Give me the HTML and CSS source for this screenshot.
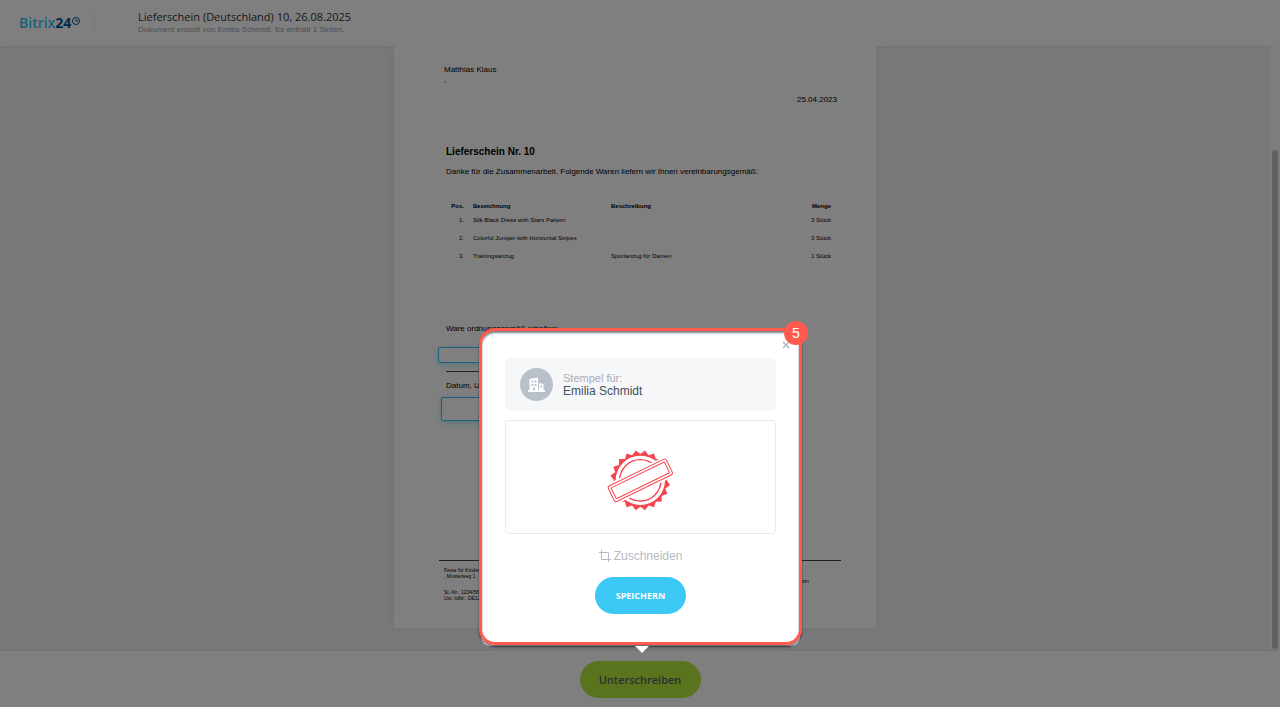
FILE: index.html
```html
<!DOCTYPE html>
<html lang="de">
<head>
	<title>Lieferschein (Deutschland) 10</title>
	<meta charset="utf-8">
	<link rel="stylesheet" href="styles.css">
</head>
<body>
<div class="app">
	<header class="header">
		<a class="logo" href="#">
			<span class="logo-name">Bitrix</span><span class="logo-num">24</span>
			<svg class="logo-clock" viewBox="0 0 16 16"><circle cx="8" cy="8" r="7"/><path d="M8 4v4h4"/></svg>
		</a>
		<div class="doc-info">
			<h1>Lieferschein (Deutschland) 10, 26.08.2025</h1>
			<p>Dokument erstellt von Emilia Schmidt. Es enthält 1 Seiten.</p>
		</div>
	</header>

	<main class="main">
		<div class="viewer">
			<article class="page">
				<p class="client">Matthias Klaus<br>,</p>
				<p class="date">25.04.2023</p>
				<h2>Lieferschein Nr. 10</h2>
				<p class="intro">Danke für die Zusammenarbeit. Folgende Waren liefern wir Ihnen vereinbarungsgemäß:</p>
				<table class="goods">
					<thead>
						<tr><th class="pos">Pos.</th><th class="name">Bezeichnung</th><th>Beschreibung</th><th class="qty">Menge</th></tr>
					</thead>
					<tbody>
						<tr><td class="pos">1.</td><td>Silk Black Dress with Stars Pattern</td><td></td><td class="qty">3 Stück</td></tr>
						<tr><td class="pos">2.</td><td>Colorful Jumper with Horizontal Stripes</td><td></td><td class="qty">3 Stück</td></tr>
						<tr><td class="pos">3.</td><td>Trainingsanzug</td><td>Sportanzug für Damen</td><td class="qty">1 Stück</td></tr>
					</tbody>
				</table>
				<p class="received">Ware ordnungsgemäß erhalten:</p>
				<div class="field field-date"></div>
				<div class="sign-line"></div>
				<p>Datum, Unterschrift</p>
				<div class="field field-sign"></div>
				<footer class="page-footer">
					<div>
						<p>Feste für Kinder<br>, Musterweg 1,</p>
						<p>St.-Nr.: 1234/567<br>Ust.-IdNr.: DE123</p>
					</div>
					<p class="mail">.com</p>
				</footer>
			</article>
		</div>
		<div class="scroll"><div class="scroll-thumb"></div></div>
	</main>

	<footer class="bottom">
		<button class="btn btn-sign" type="button">Unterschreiben</button>
	</footer>
</div>

<div class="overlay"></div>

<!-- Stempel -->
<div class="popup" role="dialog" aria-label="Stempel">
	<button class="close" type="button" aria-label="Schließen">
		<svg viewBox="0 0 16 16"><path d="M2 2l12 12M14 2L2 14"/></svg>
	</button>
	<div class="owner">
		<span class="owner-icon">
			<svg viewBox="0 0 18 16">
				<path fill-rule="evenodd" d="M0 15v-2h1.500V2L10 .5V13h1V6l4.500 1v6H17v2zM3.500 3.500v2h1.800v-2zM6.500 3.500v2h1.800v-2zM3.500 7v2h1.800V7zM6.500 7v2h1.800V7zM5 10.500V13h2v-2.500zM12.300 8.500v2h1.800v-2z"/>
			</svg>
		</span>
		<div>
			<p class="owner-label">Stempel für:</p>
			<p class="owner-name">Emilia Schmidt</p>
		</div>
	</div>
	<div class="stamp">
		<svg viewBox="0 0 300 300">
			<!-- five turned squares make the 20 teeth -->
			<g class="teeth">
				<rect x="84" y="87" width="128" height="128"/>
				<rect x="84" y="87" width="128" height="128" transform="rotate(18 148 151)"/>
				<rect x="84" y="87" width="128" height="128" transform="rotate(36 148 151)"/>
				<rect x="84" y="87" width="128" height="128" transform="rotate(54 148 151)"/>
				<rect x="84" y="87" width="128" height="128" transform="rotate(72 148 151)"/>
			</g>
			<circle class="gap" cx="148" cy="151" r="74"/>
			<circle class="ring-inner" cx="148" cy="151" r="62"/>
			<g transform="rotate(-26 148 151)">
				<rect class="gap" x="40" y="118" width="216" height="66"/>
				<rect class="band" x="51" y="125" width="194" height="52" rx="7"/>
				<rect class="band" x="59" y="133" width="178" height="36" rx="2"/>
			</g>
		</svg>
	</div>
	<button class="crop" type="button">
		<svg viewBox="0 0 12 12"><path d="M2.500 0v9.500H12M0 2.500h9.500V12"/></svg>
		Zuschneiden
	</button>
	<button class="btn btn-save" type="button">SPEICHERN</button>
	<div class="frame"></div>
	<span class="badge">5</span>
</div>
</body>
</html>
```

FILE: styles.css
```css
* { box-sizing: border-box; }
body, h1, h2, p { margin: 0; padding: 0; }
body { font-family: "Liberation Sans", Arial, sans-serif; color: #000; background-color: #fff; }
a { text-decoration: none; }
button { border: 0; padding: 0; background: none; cursor: pointer; }

.app { display: flex; flex-direction: column; height: 100vh; overflow: hidden; }

/* header */
.header { display: flex; align-items: center; height: 46px; padding-left: 19px; background-color: #fff; }
.logo { display: flex; align-items: center; width: 76px; height: 18px; margin-right: 43px; border-right: 1px solid #f4f4f4; font: 600 14px/18px "Open Sans", sans-serif; }
.logo-name { color: #2fc6f6; }
.logo-num { font-weight: 700; color: #005893; }
.logo-clock { width: 8px; height: 8px; margin: 0 0 4px 1px; fill: none; stroke: #005893; stroke-width: 2; }
.doc-info h1 { font: 400 11px/14px "Open Sans", sans-serif; color: #333; }
.doc-info p { font-size: 8px; line-height: 12px; color: #9ba1a8; }

/* document */
.main { display: flex; flex: 1; min-height: 0; background-color: #eef2f4; box-shadow: inset 0 2px 2px #e6eaec; }
.viewer { display: flex; flex: 1; justify-content: center; align-items: flex-start; overflow: hidden; }
.page { width: 482px; height: 582px; padding: 19px 35px 0 52px; background-color: #fff; box-shadow: 0 0 8px #dfe3e5; font-size: 8px; line-height: 10px; }
.client { margin-left: -2px; }
.date { margin: 10px 4px 0; text-align: right; }
.page h2 { margin-top: 41px; font-size: 10px; line-height: 12px; }
.intro { margin-top: 9px; }
.goods { width: 385px; margin-top: 25px; border-collapse: collapse; font-size: 6px; line-height: 8px; }
.goods th, .goods td { padding: 0 0 10px; text-align: left; }
.goods th { padding-bottom: 6px; }
.goods .pos { width: 27px; padding-right: 9px; text-align: right; }
.goods .name { width: 138px; }
.goods .qty { text-align: right; }
.received { margin-top: 54px; }
.field { border: 1px solid #2fc6f6; border-radius: 2px; box-shadow: 0 2px 6px #b4e6f8; }
.field-date { width: 100px; height: 16px; margin: 13px 0 8px -8px; }
.sign-line { width: 160px; height: 1px; margin-bottom: 9px; background-color: #444; }
.field-sign { width: 100px; height: 24px; margin: 6px 0 0 -5px; }
.page-footer { display: flex; justify-content: space-between; margin: 139px 0 0 -7px; padding: 6px 32px 0 5px; border-top: 1px solid #444; font-size: 5px; line-height: 6px; }
.page-footer p + p { margin-top: 10px; }
.page-footer .mail { margin-top: 11px; }
.scroll { width: 10px; padding: 104px 2px 2px; background-color: #fafafa; }
.scroll-thumb { height: 100%; border-radius: 3px; background-color: #c1c1c1; }

/* bottom bar */
.bottom { display: flex; justify-content: center; align-items: center; height: 56px; background-color: #fff; box-shadow: 0 -1px 3px #dfe3e5; }
.btn { font-family: "Open Sans", sans-serif; border-radius: 19px; }
.btn-sign { width: 121px; height: 37px; background-color: #b5e83a; color: #535c69; font-size: 11px; font-weight: 600; }

.overlay { position: fixed; top: 0; right: 0; bottom: 0; left: 0; background-color: rgba(0, 0, 0, .5); }

/* popup */
.popup { position: fixed; left: 50%; bottom: 61px; width: 319px; margin-left: -159px; padding: 27px 24px 32px; display: flex; flex-direction: column; align-items: center; background-color: #fff; border-radius: 14px 14px 9px 9px; }
.popup:after { content: ''; position: absolute; top: 100%; left: 50%; border: 7px solid transparent; border-top-color: #fff; margin-left: -6px; }
.close { position: absolute; top: 10px; right: 10px; width: 8px; height: 8px; line-height: 0; }
.close svg { width: 8px; height: 8px; fill: none; stroke: #b3b8be; stroke-width: 3; }
.owner { display: flex; align-items: center; width: 100%; height: 53px; padding-left: 15px; border-radius: 5px; background-color: #f5f7f9; }
.owner-icon { display: flex; justify-content: center; align-items: center; width: 33px; height: 33px; margin-right: 10px; border-radius: 50%; background-color: #b8c0ca; }
.owner-icon svg { width: 18px; height: 16px; fill: #fff; }
.owner p { line-height: 13px; }
.owner-label { font-size: 11px; color: #a8adb4; }
.owner-name { font-size: 12px; color: #454e5c; }
.stamp { display: flex; justify-content: center; align-items: center; width: 100%; height: 114px; margin-top: 9px; padding-top: 6px; border: 1px solid #e8eaed; border-radius: 4px; }
.stamp svg { width: 100px; height: 100px; fill: none; stroke: #f5464e; }
.stamp .teeth { fill: #f5464e; stroke: none; }
.ring-inner { stroke-width: 4; }
.stamp .gap { fill: #fff; stroke: none; }
.band { fill: #fff; stroke-width: 3; }
.crop { display: flex; align-items: center; gap: 3px; margin-top: 14px; font: 12px/16px "Liberation Sans", Arial, sans-serif; color: #b5bac1; }
.crop svg { width: 12px; height: 12px; fill: none; stroke: #b5bac1; }
.btn-save { width: 91px; height: 37px; margin-top: 13px; background-color: #3bc8f5; color: #fff; font-size: 9px; font-weight: 700; }
.frame { position: absolute; top: -3px; right: -2px; bottom: 1px; left: -2px; border: 3px solid #ff5a4d; border-radius: 16px; box-shadow: 0 2px 2px rgba(0, 0, 0, .6), inset 0 2px 2px rgba(0, 0, 0, .5); pointer-events: none; }
.badge { position: absolute; top: -10px; right: -8px; width: 24px; height: 24px; border-radius: 50%; background-color: #ff5a4d; color: #fff; font-size: 14px; line-height: 24px; text-align: center; }
```
